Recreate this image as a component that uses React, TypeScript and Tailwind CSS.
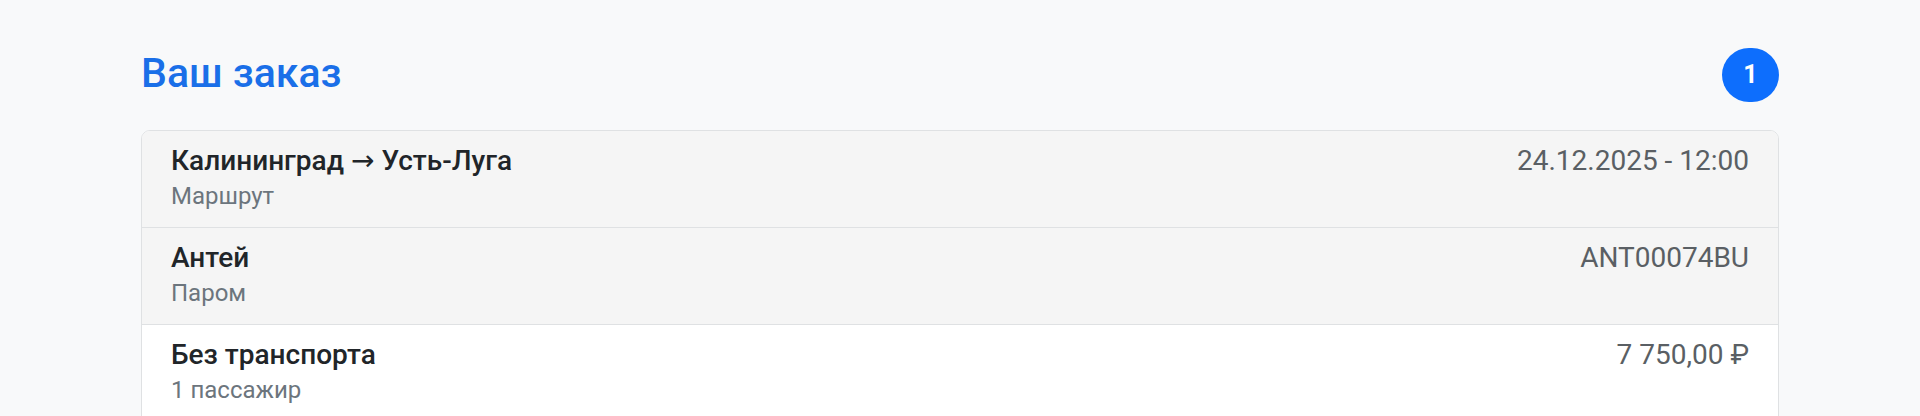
type Row = {
  title: string
  sub: string
  value: string
  muted?: boolean
}

const rows: Row[] = [
  { title: "Калининград|Усть-Луга", sub: "Маршрут", value: "24.12.2025 - 12:00", muted: true },
  { title: "Антей", sub: "Паром", value: "ANT00074BU", muted: true },
  { title: "Без транспорта", sub: "1 пассажир", value: "7 750,00 ₽" },
  { title: "Взрослый", sub: "Пассажир", value: "7 750,00 ₽" },
]

function Title({ text }: { text: string }) {
  // маршрут разделяем стрелкой
  const parts = text.split("|")
  if (parts.length < 2) return <>{text}</>
  return (
    <>
      {parts[0]}{" "}
      <span className="font-normal" style={{ fontFamily: "'DejaVu Sans', sans-serif" }}>→</span>{" "}
      {parts[1]}
    </>
  )
}

export default function App() {
  return (
    <div
      className="min-h-[416px] bg-[#f8f9fa] px-[141px] pt-[48px] pb-10"
      style={{ fontFamily: "Roboto, 'Noto Sans', sans-serif" }}
    >
      <div className="flex h-[54px] items-center justify-between mb-[28px]">
        <h2 className="text-[41px] leading-[48px] font-medium text-[#1a6fe8] -mt-[5px]">Ваш заказ</h2>
        <span className="flex h-[54px] w-[57px] items-center justify-center rounded-full bg-[#0d6efd] text-[25px] font-bold text-white">
          1
        </span>
      </div>

      <div className="overflow-hidden rounded-[9px] border border-[#dfe1e3] bg-white">
        {rows.map((row, i) => (
          <div
            key={i}
            className={`flex items-start justify-between px-[29px] pt-[12px] pb-[14px] ${
              i > 0 ? "border-t border-[#dfe1e3]" : ""
            } ${row.muted ? "bg-[#f5f5f5]" : "bg-white"}`}
          >
            <div>
              <div className="text-[28px] leading-[36px] font-medium text-[#212529]">
                <Title text={row.title} />
              </div>
              <div className="text-[24px] leading-[34px] text-[#6c757d]">{row.sub}</div>
            </div>
            <div className="text-[28px] leading-[36px] text-[#5a5f64]">{row.value}</div>
          </div>
        ))}
      </div>
    </div>
  )
}
